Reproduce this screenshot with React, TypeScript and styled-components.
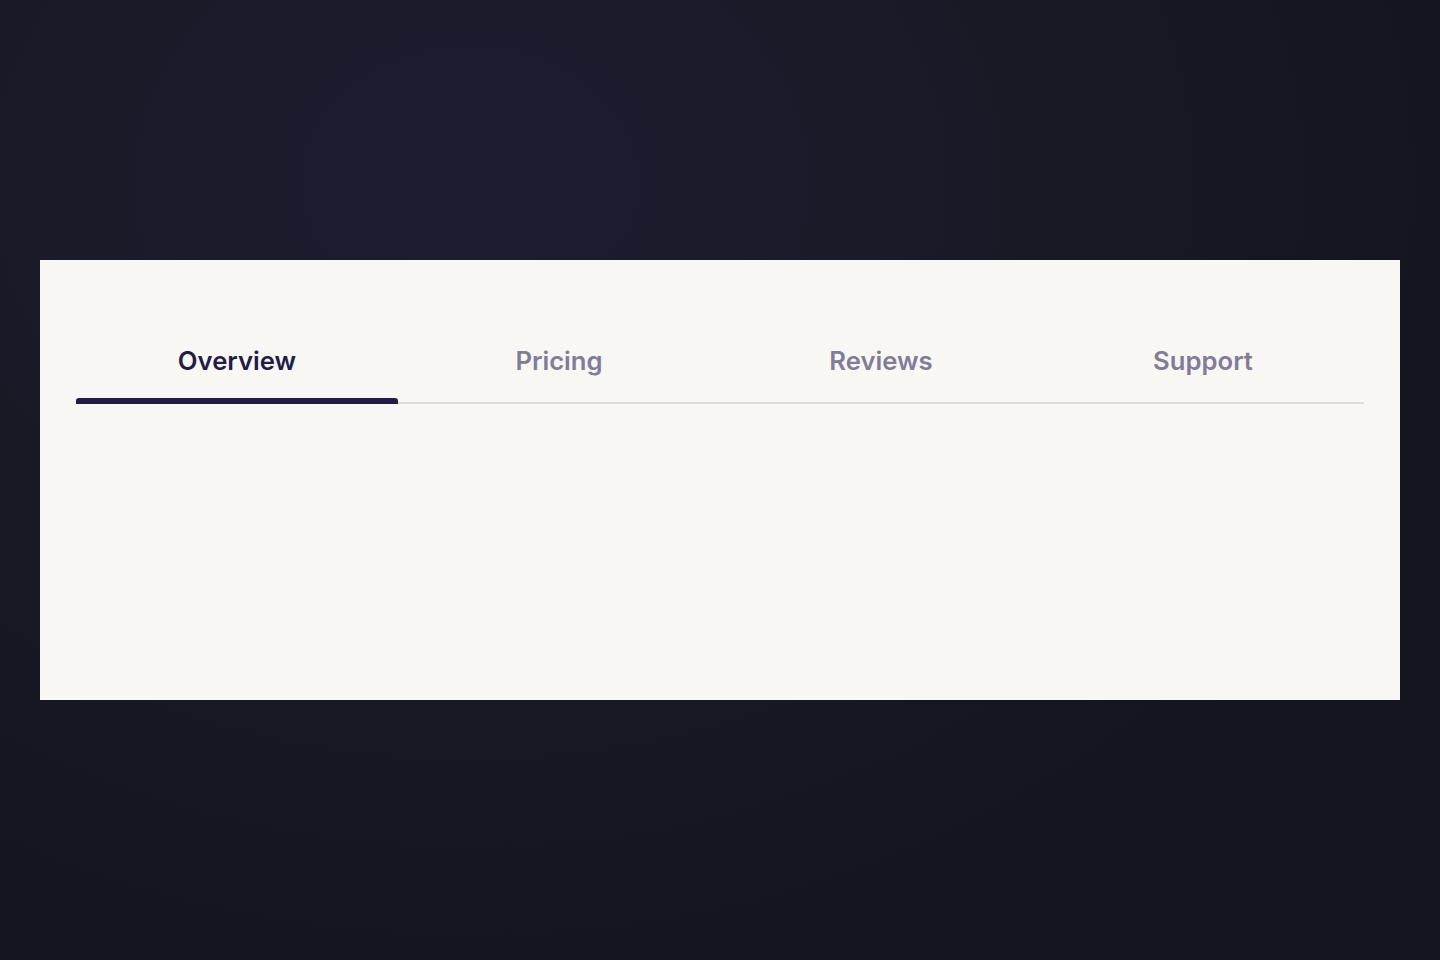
import React, { useState } from "react";
import styled, { createGlobalStyle } from "styled-components";

const Global = createGlobalStyle`
  html, body { margin: 0; padding: 0; }
  body {
    min-height: 960px;
    font-family: Inter, "Noto Sans", sans-serif;
    background: radial-gradient(ellipse 1000px 800px at 470px 180px, #1e1c30 0%, #1a1a28 45%, #15151e 100%);
    background-color: #15151e;
  }
`;

const Page = styled.div`
  min-height: 960px;
  box-sizing: border-box;
  padding: 260px 40px 0;
`;

const Card = styled.section`
  background: #f8f7f3;
  height: 440px;
  box-sizing: border-box;
  padding: 66px 36px 0;
`;

const TabList = styled.div`
  display: grid;
  grid-template-columns: repeat(4, 1fr);
  box-shadow: inset 0 -2px 0 #dcdbd8;
`;

const Tab = styled.button<{ $active: boolean }>`
  position: relative;
  border: 0;
  background: transparent;
  padding: 19px 0 27px;
  font-family: Inter, "Noto Sans", sans-serif;
  font-size: 25.7px;
  line-height: 32px;
  font-weight: 600;
  color: ${(p) => (p.$active ? "#221c47" : "#837c99")};
  cursor: pointer;
  &::after {
    content: "";
    position: absolute;
    left: 0;
    right: 0;
    bottom: 0;
    height: 6px;
    border-radius: 3px 3px 0 0;
    background: ${(p) => (p.$active ? "#221c47" : "transparent")};
  }
`;

const tabs = ["Overview", "Pricing", "Reviews", "Support"];

export default function App() {
  const [active, setActive] = useState(0);
  return (
    <>
      <Global />
      <Page>
        <Card>
          <TabList role="tablist">
            {tabs.map((t, i) => (
              <Tab key={t} role="tab" $active={i === active} onClick={() => setActive(i)}>
                {t}
              </Tab>
            ))}
          </TabList>
        </Card>
      </Page>
    </>
  );
}
